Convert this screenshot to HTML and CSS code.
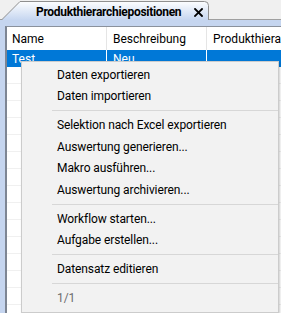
FILE: index.html
```html
<!DOCTYPE html>
<html>
<head>
  <title>Produkthierarchiepositionen</title>
  <link rel="stylesheet" href="styles.css">
</head>
<body>
  <div class="window">
    <div class="tabstrip">
      <div class="tab">
        <svg class="tab-shape" width="209" height="20" viewBox="0 0 209 20">
          <defs>
            <linearGradient id="tabfill" x1="0" y1="0" x2="0" y2="1">
              <stop offset="0" stop-color="#fdfeff"/>
              <stop offset="1" stop-color="#c6d6f0"/>
            </linearGradient>
          </defs>
          <path d="M0.5 20 L19 1.5 H203.5 Q207.5 1.5 207.5 5.5 V20" fill="url(#tabfill)" stroke="#8f8f8f" stroke-width="1"/>
        </svg>
        <span class="tab-title">Produkthierarchiepositionen</span>
        <svg class="tab-close" width="9" height="9" viewBox="0 0 9 9">
          <path d="M1 1 L8 8 M8 1 L1 8" stroke="#000" stroke-width="1.8" stroke-linecap="square"/>
        </svg>
      </div>
    </div>

    <div class="frame">
      <div class="grid">
        <div class="row head">
          <div class="cell">Name</div>
          <div class="cell">Beschreibung</div>
          <div class="cell">Produkthierarchie</div>
        </div>
        <div class="row selected">
          <div class="cell">Test</div>
          <div class="cell">Neu</div>
          <div class="cell"></div>
        </div>
        <div class="row"><div class="cell"></div><div class="cell"></div><div class="cell"></div></div>
        <div class="row"><div class="cell"></div><div class="cell"></div><div class="cell"></div></div>
        <div class="row"><div class="cell"></div><div class="cell"></div><div class="cell"></div></div>
        <div class="row"><div class="cell"></div><div class="cell"></div><div class="cell"></div></div>
        <div class="row"><div class="cell"></div><div class="cell"></div><div class="cell"></div></div>
        <div class="row"><div class="cell"></div><div class="cell"></div><div class="cell"></div></div>
        <div class="row"><div class="cell"></div><div class="cell"></div><div class="cell"></div></div>
        <div class="row"><div class="cell"></div><div class="cell"></div><div class="cell"></div></div>
        <div class="row"><div class="cell"></div><div class="cell"></div><div class="cell"></div></div>
        <div class="row"><div class="cell"></div><div class="cell"></div><div class="cell"></div></div>
        <div class="row"><div class="cell"></div><div class="cell"></div><div class="cell"></div></div>
        <div class="row"><div class="cell"></div><div class="cell"></div><div class="cell"></div></div>
        <div class="row"><div class="cell"></div><div class="cell"></div><div class="cell"></div></div>
        <div class="row"><div class="cell"></div><div class="cell"></div><div class="cell"></div></div>
      </div>
    </div>

    <ul class="menu">
      <li class="menu-item">Daten exportieren</li>
      <li class="menu-item">Daten importieren</li>
      <li class="menu-sep"></li>
      <li class="menu-item">Selektion nach Excel exportieren</li>
      <li class="menu-item">Auswertung generieren...</li>
      <li class="menu-item">Makro ausführen...</li>
      <li class="menu-item">Auswertung archivieren...</li>
      <li class="menu-sep"></li>
      <li class="menu-item">Workflow starten...</li>
      <li class="menu-item">Aufgabe erstellen...</li>
      <li class="menu-sep"></li>
      <li class="menu-item">Datensatz editieren</li>
      <li class="menu-sep"></li>
      <li class="menu-item disabled">1/1</li>
    </ul>
  </div>
</body>
</html>
```

FILE: styles.css
```css
body {
  margin: 0;
  font-family: Roboto, "Noto Sans", sans-serif;
  font-size: 12px;
  color: #000;
  background: #f0f0f0;
}

.window {
  position: relative;
  width: 281px;
  height: 313px;
  overflow: hidden;
  display: flex;
  flex-direction: column;
}

/* tab strip */
.tabstrip {
  height: 20px;
  flex: none;
  display: flex;
  align-items: flex-end;
  background: #f0f0f0;
  box-shadow: inset 0 -1px 0 #a0a0a0;
}

.tab {
  position: relative;
  margin-left: 1px;
  width: 209px;
  height: 20px;
  display: flex;
  align-items: center;
  padding: 3px 0 0 35px;
  box-sizing: border-box;
}

.tab-shape {
  position: absolute;
  left: 0;
  top: 0;
}

.tab-title {
  position: relative;
  font-weight: bold;
  font-size: 12px;
  letter-spacing: -0.3px;
  white-space: nowrap;
}

.tab-close {
  position: absolute;
  left: 193px;
  top: 8px;
}

/* frame + grid */
.frame {
  flex: 1;
  background: #c5d5ef;
  padding: 6px 0 0 5px;
  display: flex;
}

.grid {
  flex: 1;
  background: #fff;
  border-left: 2px solid #7d8593;
  border-top: 1px solid #8a919c;
  overflow: hidden;
}

.row {
  display: flex;
  height: 17px;
  border-bottom: 1px solid #f0f0f0;
  box-sizing: border-box;
}

.row.head {
  height: 23px;
  border-bottom: none;
}

.row.selected {
  background: #0078d7;
  color: #fff;
  border-bottom: none;
}

.cell {
  flex: none;
  width: 100px;
  box-sizing: border-box;
  border-right: 1px solid #e5e5e5;
  padding-left: 5px;
  display: flex;
  align-items: center;
  white-space: nowrap;
}

.cell + .cell {
  padding-left: 6px;
}

.row.selected .cell {
  border-right-color: #fff;
}

.cell:last-child {
  width: 160px;
}

/* context menu */
.menu {
  position: absolute;
  left: 21px;
  top: 61px;
  width: 258px;
  margin: 0;
  padding: 2px 0 3px;
  list-style: none;
  background: #f2f2f2;
  border: 1px solid #cccccc;
  box-sizing: border-box;
  box-shadow: 1px 1px 2px rgba(0, 0, 0, 0.2);
}

.menu-item {
  height: 21.5px;
  padding-left: 35px;
  display: flex;
  align-items: center;
  letter-spacing: -0.1px;
  white-space: nowrap;
}

.menu-item.disabled {
  color: #6d6d6d;
}

.menu-sep {
  height: 7.5px;
  margin-left: 30px;
  display: flex;
  align-items: center;
}

.menu-sep::before {
  content: "";
  flex: 1;
  height: 1px;
  background: #d7d7d7;
}
```
